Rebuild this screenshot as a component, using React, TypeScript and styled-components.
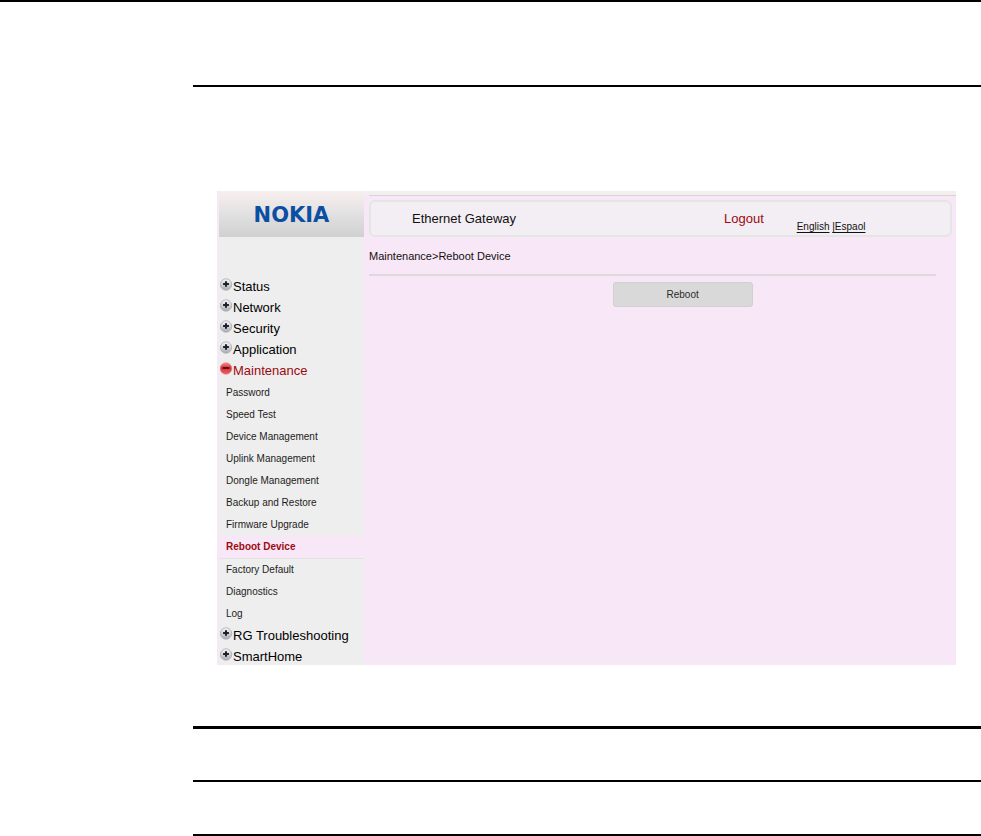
import React from "react";
import styled, { createGlobalStyle } from "styled-components";

const GlobalStyle = createGlobalStyle`
  *, *::before, *::after { box-sizing: border-box; }
  body {
    margin: 0;
    background: #fff;
    color: #111;
    font-family: "Liberation Sans", Arial, sans-serif;
  }
`;

const Page = styled.div`
  border-top: 2px solid #000;
`;

const Article = styled.div`
  margin-left: 193px;
  padding-top: 83px;
`;

const Rule = styled.hr<{ $weight?: number; $after?: number }>`
  height: ${(p) => p.$weight ?? 2}px;
  margin: 0 0 ${(p) => p.$after ?? 0}px;
  border: 0;
  background: #000;
`;

const Figure = styled.div`
  display: grid;
  grid-template-columns: 145px minmax(0, 1fr);
  margin: 104px 25px 61px 24px;
  padding-left: 2px;
  background: #f8e7f6;
`;

const Sidebar = styled.aside`
  background: #eeeeee;
`;

const Brand = styled.div`
  display: flex;
  align-items: center;
  justify-content: center;
  height: 46px;
  padding-top: 2px;
  background: linear-gradient(#f8efee, #e2e1e2 50%, #d0d0d0);
  color: #0b4ea2;
  font: bold 21px "DejaVu Sans", Verdana, sans-serif;
`;

const Menu = styled.nav`
  display: flex;
  flex-direction: column;
  padding-top: 39px;
`;

const Group = styled.button<{ $open?: boolean }>`
  display: flex;
  align-items: flex-start;
  height: 21px;
  padding: 0 0 0 1px;
  border: 0;
  background: none;
  color: ${(p) => (p.$open ? "#9c0a12" : "#000")};
  font: 13px/21px "Liberation Sans", Arial, sans-serif;
  text-align: left;
  white-space: nowrap;
  cursor: pointer;

  &:last-child {
    height: 19px;
  }

  svg {
    flex: none;
    margin-top: 2px;
  }
`;

const SubMenu = styled.ul`
  margin: 0;
  padding: 1px 0 0;
  list-style: none;
`;

const SubLink = styled.a<{ $current?: boolean }>`
  display: block;
  padding-left: 7px;
  border-bottom: ${(p) => (p.$current ? "1px solid #e2e4e2" : "0")};
  background: ${(p) => (p.$current ? "#f8e7f6" : "none")};
  color: ${(p) => (p.$current ? "#9c0a12" : "#1c1c1c")};
  font-size: 10px;
  font-weight: ${(p) => (p.$current ? "bold" : "normal")};
  line-height: 22px;
  text-decoration: none;
`;

const Content = styled.div`
  border-top: 4px solid #f3efef;
`;

const Main = styled.main`
  margin-left: 5px;
  padding-top: 4px;
  border-top: 1px solid #d9d3d9;
`;

const Banner = styled.header`
  display: grid;
  grid-template-columns: 58% 13.5% 1fr;
  align-items: center;
  height: 37px;
  margin-right: 4px;
  padding-left: 41px;
  border: 2px solid #e4e6e4;
  border-radius: 6px;
  background: #f3eef3;
`;

const Product = styled.span`
  font-size: 13px;
`;

const Logout = styled.a`
  color: #9c0a12;
  font-size: 13px;
  text-decoration: none;
`;

const Languages = styled.div`
  align-self: end;
  font-size: 10px;
  line-height: 16px;

  a {
    color: #111;
    text-underline-offset: 2px;
  }
`;

const Breadcrumb = styled.div`
  margin-right: 20px;
  padding: 9px 0 8px;
  border-bottom: 2px solid #dfd9df;
  font-size: 11px;
  line-height: 20px;
`;

const Reboot = styled.button`
  display: block;
  width: 140px;
  height: 25px;
  margin: 6px 0 0 41.5%;
  border: 1px solid #cfd0cf;
  border-radius: 3px;
  background: #d9d9d9;
  color: #2b2b2b;
  font: 10px "Liberation Sans", Arial, sans-serif;
  cursor: pointer;
`;

function PlusIcon() {
  return (
    <svg width="13" height="13" viewBox="0 0 13 13" aria-hidden="true">
      <defs>
        <linearGradient id="silver" x1="0" y1="0" x2="0" y2="1">
          <stop offset="0" stopColor="#f7f7fa" />
          <stop offset="1" stopColor="#a9a9b3" />
        </linearGradient>
      </defs>
      <circle cx="6" cy="6.5" r="5.7" fill="url(#silver)" stroke="#aaaab2" strokeWidth=".8" />
      <path d="M6 3.2v5.6M3.1 6h5.8" stroke="#202028" strokeWidth="2" />
    </svg>
  );
}

function MinusIcon() {
  return (
    <svg width="13" height="13" viewBox="0 0 13 13" aria-hidden="true">
      <defs>
        <linearGradient id="red" x1="0" y1="0" x2="0" y2="1">
          <stop offset="0" stopColor="#f58d8d" />
          <stop offset=".45" stopColor="#d62f36" />
          <stop offset="1" stopColor="#ef6565" />
        </linearGradient>
      </defs>
      <circle cx="6" cy="6.5" r="5.8" fill="url(#red)" stroke="#dc7777" strokeWidth=".6" />
      <path d="M2.7 6h6.6" stroke="#5e1015" strokeWidth="2" />
    </svg>
  );
}

const maintenance = [
  "Password",
  "Speed Test",
  "Device Management",
  "Uplink Management",
  "Dongle Management",
  "Backup and Restore",
  "Firmware Upgrade",
  "Reboot Device",
  "Factory Default",
  "Diagnostics",
  "Log",
];

const groups = [
  "Status",
  "Network",
  "Security",
  "Application",
  "Maintenance",
  "RG Troubleshooting",
  "SmartHome",
];

export default function App() {
  return (
    <>
      <GlobalStyle />
      <Page>
        <Article>
          <Rule />
          <Figure>
            <Sidebar>
              <Brand>NOKIA</Brand>
              <Menu aria-label="Gateway sections">
                {groups.map((name) => {
                  const open = name === "Maintenance";
                  return (
                    <React.Fragment key={name}>
                      <Group type="button" $open={open} aria-expanded={open}>
                        {open ? <MinusIcon /> : <PlusIcon />}
                        {name}
                      </Group>
                      {open && (
                        <SubMenu>
                          {maintenance.map((item) => (
                            <li key={item}>
                              <SubLink
                                href="#"
                                $current={item === "Reboot Device"}
                                aria-current={item === "Reboot Device" ? "page" : undefined}
                              >
                                {item}
                              </SubLink>
                            </li>
                          ))}
                        </SubMenu>
                      )}
                    </React.Fragment>
                  );
                })}
              </Menu>
            </Sidebar>
            <Content>
              <Main>
                <Banner>
                  <Product>Ethernet Gateway</Product>
                  <Logout href="#">Logout</Logout>
                  <Languages>
                    <a href="#">English</a> <a href="#">|Espaol</a>
                  </Languages>
                </Banner>
                <Breadcrumb>Maintenance&gt;Reboot Device</Breadcrumb>
                <Reboot type="button">Reboot</Reboot>
              </Main>
            </Content>
          </Figure>
          <Rule $weight={3} $after={51} />
          <Rule $after={52} />
          <Rule />
        </Article>
      </Page>
    </>
  );
}
